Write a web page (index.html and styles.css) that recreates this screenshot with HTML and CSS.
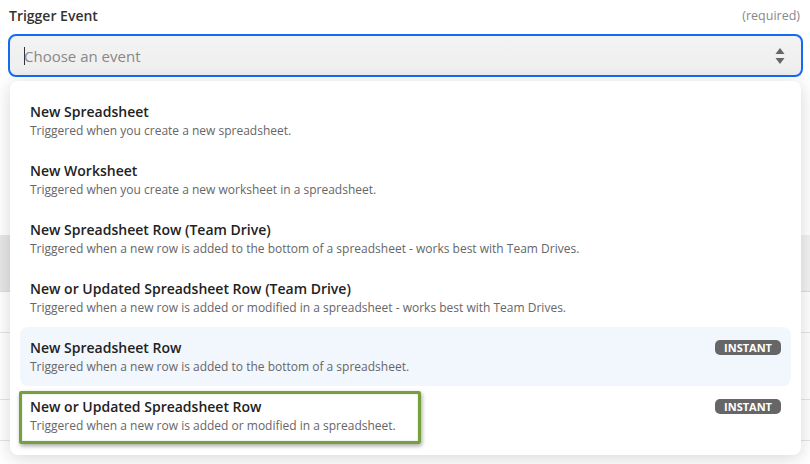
FILE: index.html
```html
<!DOCTYPE html>
<html lang="en">
<head>
	<meta charset="UTF-8">
	<title>Trigger Event</title>
	<link rel="stylesheet" href="styles.css">
</head>
<body>
	<div class="field">
		<div class="labelRow">
			<span class="label">Trigger Event</span>
			<span class="req">(required)</span>
		</div>
		<div class="select">
			<span class="caret"></span>
			<span class="placeholder">Choose an event</span>
			<svg class="arrows" width="10" height="18" viewBox="0 0 10 18">
				<path d="M5 1 L9.5 7 L0.5 7 Z" fill="#666"/>
				<path d="M5 17 L9.5 11 L0.5 11 Z" fill="#666"/>
			</svg>
		</div>
	</div>

	<div class="backdrop">
		<div class="band"></div>
		<div class="row"></div>
		<div class="row tall"></div>
		<div class="row"></div>
	</div>

	<ul class="menu">
		<li class="item">
			<div class="top"><span class="title">New Spreadsheet</span></div>
			<div class="desc">Triggered when you create a new spreadsheet.</div>
		</li>
		<li class="item">
			<div class="top"><span class="title">New Worksheet</span></div>
			<div class="desc">Triggered when you create a new worksheet in a spreadsheet.</div>
		</li>
		<li class="item">
			<div class="top"><span class="title">New Spreadsheet Row (Team Drive)</span></div>
			<div class="desc">Triggered when a new row is added to the bottom of a spreadsheet - works best with Team Drives.</div>
		</li>
		<li class="item">
			<div class="top"><span class="title">New or Updated Spreadsheet Row (Team Drive)</span></div>
			<div class="desc">Triggered when a new row is added or modified in a spreadsheet - works best with Team Drives.</div>
		</li>
		<li class="item hover">
			<div class="top"><span class="title">New Spreadsheet Row</span><span class="badge">INSTANT</span></div>
			<div class="desc">Triggered when a new row is added to the bottom of a spreadsheet.</div>
		</li>
		<li class="item">
			<div class="top"><span class="title">New or Updated Spreadsheet Row</span><span class="badge">INSTANT</span></div>
			<div class="desc">Triggered when a new row is added or modified in a spreadsheet.</div>
		</li>
	</ul>
	<div class="mark"></div>
</body>
</html>
```

FILE: styles.css
```css
body{
	margin: 0;
	width: 810px;
	height: 464px;
	overflow: hidden;
	background-color: #fff;
	font-family: "Open Sans", "Noto Sans", sans-serif;
	position: relative;
}
.field{
	padding-top: 5px;
}
.labelRow{
	display: flex;
	justify-content: space-between;
	align-items: center;
	height: 20px;
	padding: 0 10px 0 9px;
}
.label{
	font-size: 14px;
	font-weight: 600;
	color: #333;
}
.req{
	font-size: 12.5px;
	color: #888;
}
.select{
	box-sizing: border-box;
	height: 43px;
	margin: 9px 7px 0 8px;
	border: 2px solid #136bf5;
	border-radius: 8px;
	background: linear-gradient(#f3f3f3, #eeeeee);
	display: flex;
	align-items: center;
	padding: 0 14px;
}
.caret{
	width: 1px;
	height: 18px;
	background-color: #333;
	margin-right: -1px;
}
.placeholder{
	flex: 1;
	font-size: 15px;
	color: #888;
}
.arrows{
	margin-right: 2px;
}
.backdrop{
	margin-top: 158px;
}
.band{
	height: 56px;
	background: linear-gradient(90deg, #e6e6e6, #f2f2f2);
	border-bottom: 1px solid #ddd;
}
.row{
	height: 40px;
	border-bottom: 1px solid #e4e4e4;
}
.row.tall{
	height: 66px;
}
.menu{
	position: absolute;
	left: 10px;
	top: 81px;
	width: 791px;
	box-sizing: border-box;
	margin: 0;
	padding: 10px;
	list-style: none;
	background-color: #fff;
	border-radius: 8px;
	box-shadow: 0 3px 18px rgba(0,0,0,.16);
}
.item{
	height: 59px;
	box-sizing: border-box;
	padding: 10px 10px 0 10px;
	border-radius: 8px;
}
.item.hover{
	background-color: #f2f7fe;
}
.top{
	display: flex;
	justify-content: space-between;
	align-items: center;
	height: 20px;
}
.title{
	font-size: 14px;
	font-weight: 600;
	color: #222;
}
.desc{
	font-size: 12px;
	line-height: 20px;
	color: #666;
}
.badge{
	background-color: #666;
	color: #fff;
	font-size: 11px;
	font-weight: 700;
	line-height: 15px;
	height: 15px;
	padding: 0 9px;
	border-radius: 5px;
}
.mark{
	position: absolute;
	left: 19px;
	top: 391px;
	width: 402px;
	height: 53px;
	box-sizing: border-box;
	border: 3px solid #76a03a;
	border-radius: 2px;
	box-shadow: 1px 2px 4px rgba(0,0,0,.35), inset 0 0 2px rgba(0,0,0,.2);
}
```
